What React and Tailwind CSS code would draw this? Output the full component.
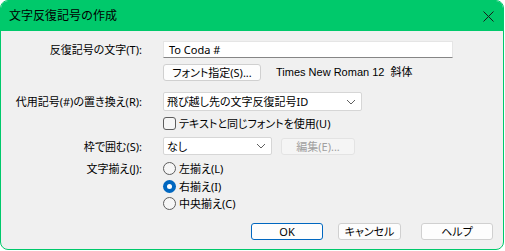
import React from "react";

const font = { fontFamily: '"Noto Sans", "Noto Sans CJK JP", sans-serif' };
const latin = { fontFamily: '"Liberation Sans", "Noto Sans CJK JP", sans-serif' };

const Chevron = () => (
  <svg width="10" height="6" viewBox="0 0 10 6" className="shrink-0">
    <polyline points="1,1 5,5 9,1" fill="none" stroke="#5f5f5f" strokeWidth="1" />
  </svg>
);

const Radio = ({ checked, label }) => (
  <div className="flex items-center h-[13px]">
    {checked ? (
      <span className="w-[13px] h-[13px] rounded-full bg-[#0067c0] flex items-center justify-center">
        <span className="w-[5px] h-[5px] rounded-full bg-white" />
      </span>
    ) : (
      <span className="w-[13px] h-[13px] rounded-full border border-[#5d5d5d] bg-[#f6f6f6]" />
    )}
    <span className="ml-[3px] text-[11px] leading-none text-black whitespace-nowrap">{label}</span>
  </div>
);

const Label = ({ children }) => (
  <div className="w-[141px] shrink-0 text-right text-[11px] leading-none text-black whitespace-nowrap">
    {children}
  </div>
);

const Button = ({ children, primary, className = "" }) => (
  <div
    className={
      "h-[17px] flex items-center justify-center rounded-[3px] bg-[#fdfdfd] text-[11px] leading-none text-black whitespace-nowrap border " +
      (primary ? "border-[#0067c0] " : "border-[#d0d0d0] ") +
      className
    }
  >
    {children}
  </div>
);

export default function App() {
  return (
    <div className="w-[505px] h-[251px] bg-white [font-feature-settings:'palt']" style={font}>
      <div className="w-[504px] h-[250px] border border-[#00c96b] rounded-[8px] overflow-hidden bg-[#f0f0f0] flex flex-col">
        <div className="h-[30px] shrink-0 bg-[#00c96b] flex items-center justify-between pl-[8px] pr-[9px]">
          <span className="text-[12px] leading-none text-black whitespace-nowrap [font-feature-settings:normal]">
            文字反復記号の作成
          </span>
          <svg width="11" height="11" viewBox="0 0 11 11">
            <path d="M0.5 0.5 L10.5 10.5 M10.5 0.5 L0.5 10.5" stroke="#1a1a1a" strokeWidth="1" />
          </svg>
        </div>

        <div className="flex items-center mt-[10px]">
          <Label>反復記号の文字(T):</Label>
          <div className="ml-[21px] w-[290px] h-[17px] bg-white border border-[#e5e5e5] border-b-[#868686] flex items-center pl-[5px] text-[11px] leading-none text-black whitespace-nowrap">
            To Coda #
          </div>
        </div>

        <div className="flex items-center mt-[6px]">
          <div className="w-[141px] shrink-0" />
          <Button className="ml-[21px] w-[98px]">フォント指定(S)...</Button>
          <span className="ml-[15px] text-[11px] leading-none text-black whitespace-nowrap" style={latin}>
            Times New Roman 12&nbsp;&nbsp;斜体
          </span>
        </div>

        <div className="flex items-center mt-[11px]">
          <Label>代用記号(#)の置き換え(R):</Label>
          <div className="ml-[21px] w-[199px] h-[19px] bg-white border border-[#d6d6d6] rounded-[2px] flex items-center justify-between pl-[3px] pr-[5px] text-[11px] leading-none text-black whitespace-nowrap">
            <span>飛び越し先の文字反復記号ID</span>
            <Chevron />
          </div>
        </div>

        <div className="flex items-center mt-[6px]">
          <div className="w-[141px] shrink-0" />
          <span className="ml-[21px] w-[13px] h-[13px] rounded-[3px] border border-[#5d5d5d] bg-[#f6f6f6]" />
          <span className="ml-[3px] text-[11px] leading-none text-black whitespace-nowrap">
            テキストと同じフォントを使用(U)
          </span>
        </div>

        <div className="flex items-center mt-[7px]">
          <Label>枠で囲む(S):</Label>
          <div className="ml-[21px] w-[109px] h-[18px] bg-white border border-[#d6d6d6] rounded-[2px] flex items-center justify-between pl-[3px] pr-[5px] text-[11px] leading-none text-black whitespace-nowrap">
            <span>なし</span>
            <Chevron />
          </div>
          <div className="ml-[9px] w-[74px] h-[17px] rounded-[3px] bg-[#f5f5f5] border border-[#e3e3e3] flex items-center justify-center text-[11px] leading-none text-[#a0a0a0] whitespace-nowrap">
            編集(E)...
          </div>
        </div>

        <div className="flex items-start mt-[7px]">
          <div className="h-[13px] flex items-center">
            <Label>文字揃え(J):</Label>
          </div>
          <div className="ml-[21px] flex flex-col">
            <Radio label="左揃え(L)" />
            <div className="mt-[5px]">
              <Radio checked label="右揃え(I)" />
            </div>
            <div className="mt-[4px]">
              <Radio label="中央揃え(C)" />
            </div>
          </div>
        </div>

        <div className="flex items-center mt-[13px] pl-[250px]">
          <Button primary className="w-[72px]">OK</Button>
          <Button className="ml-[15px] w-[63px]">キャンセル</Button>
          <Button className="ml-[20px] w-[72px]">ヘルプ</Button>
        </div>
      </div>
    </div>
  );
}
